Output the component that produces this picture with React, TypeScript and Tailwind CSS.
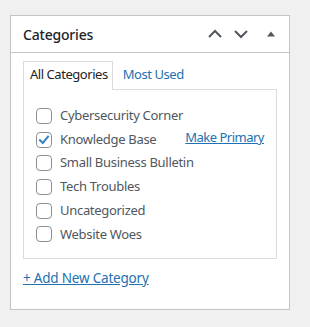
import React from "react";

const cats = [
  { name: "Cybersecurity Corner", checked: false },
  { name: "Knowledge Base", checked: true },
  { name: "Small Business Bulletin", checked: false },
  { name: "Tech Troubles", checked: false },
  { name: "Uncategorized", checked: false },
  { name: "Website Woes", checked: false },
];

function Box({ checked }: { checked: boolean }) {
  return (
    <span className="w-4 h-4 shrink-0 rounded-[4px] border border-[#8c8f94] bg-white flex items-center justify-center">
      {checked && (
        <svg width="14" height="14" viewBox="0 0 14 14">
          <path d="M3 7.2 L5.8 10 L11 3.6" fill="none" stroke="#3582c4" strokeWidth="2" strokeLinecap="square" />
        </svg>
      )}
    </span>
  );
}

export default function App() {
  return (
    <div
      className="w-[310px] h-[327px] bg-[#f0f0f1] pt-[15px] pl-[10px]"
      style={{ fontFamily: '"Noto Sans", "Open Sans", sans-serif' }}
    >
      <div className="w-[280px] h-[295px] bg-white border border-[#c3c4c7]">
        <div className="h-[37px] border-b border-[#c3c4c7] flex items-center pl-[12px] pr-[14px]">
          <h2 className="text-[14px] text-[#1d2327] font-medium flex-1 tracking-[-0.2px]">Categories</h2>
          <div className="flex items-center text-[#50575e]">
            <svg width="16" height="10" viewBox="0 0 16 10" className="mr-[10px]">
              <path d="M2 8 L8 2 L14 8" fill="none" stroke="#50575e" strokeWidth="2" />
            </svg>
            <svg width="16" height="10" viewBox="0 0 16 10" className="mr-[18px]">
              <path d="M2 2 L8 8 L14 2" fill="none" stroke="#50575e" strokeWidth="2" />
            </svg>
            <svg width="8" height="6" viewBox="0 0 8 6">
              <path d="M0 5.5 L4 0.5 L8 5.5 Z" fill="#50575e" />
            </svg>
          </div>
        </div>
        <div className="pt-[8px] px-[12px]">
          <div className="flex h-[28px] text-[13px] leading-none tracking-[-0.45px]">
            <div className="h-[29px] pl-[6px] pr-[4px] pb-[3px] flex items-center border border-b-0 border-[#dcdcde] text-[#1d2327] bg-white relative z-10">
              All Categories
            </div>
            <div className="h-[28px] pl-[10px] pb-[1px] flex items-center text-[#2271b1]">Most Used</div>
          </div>
          <div className="border border-[#dcdcde] pt-[14px] pb-[11.8px] pl-[12px] pr-[12px]">
            {cats.map((c) => (
              <div key={c.name} className="h-[23.7px] flex items-center text-[13px] text-[#50575e] tracking-[-0.3px]">
                <Box checked={c.checked} />
                <span className="ml-[8px] flex-1">{c.name}</span>
                {c.checked && (
                  <a className="text-[#2271b1] underline -mt-[3px] tracking-[-0.5px]">Make Primary</a>
                )}
              </div>
            ))}
          </div>
          <div className="mt-[9px] text-[13.5px] text-[#2271b1] underline tracking-[-0.2px] leading-[20px]">+ Add New Category</div>
        </div>
      </div>
    </div>
  );
}
